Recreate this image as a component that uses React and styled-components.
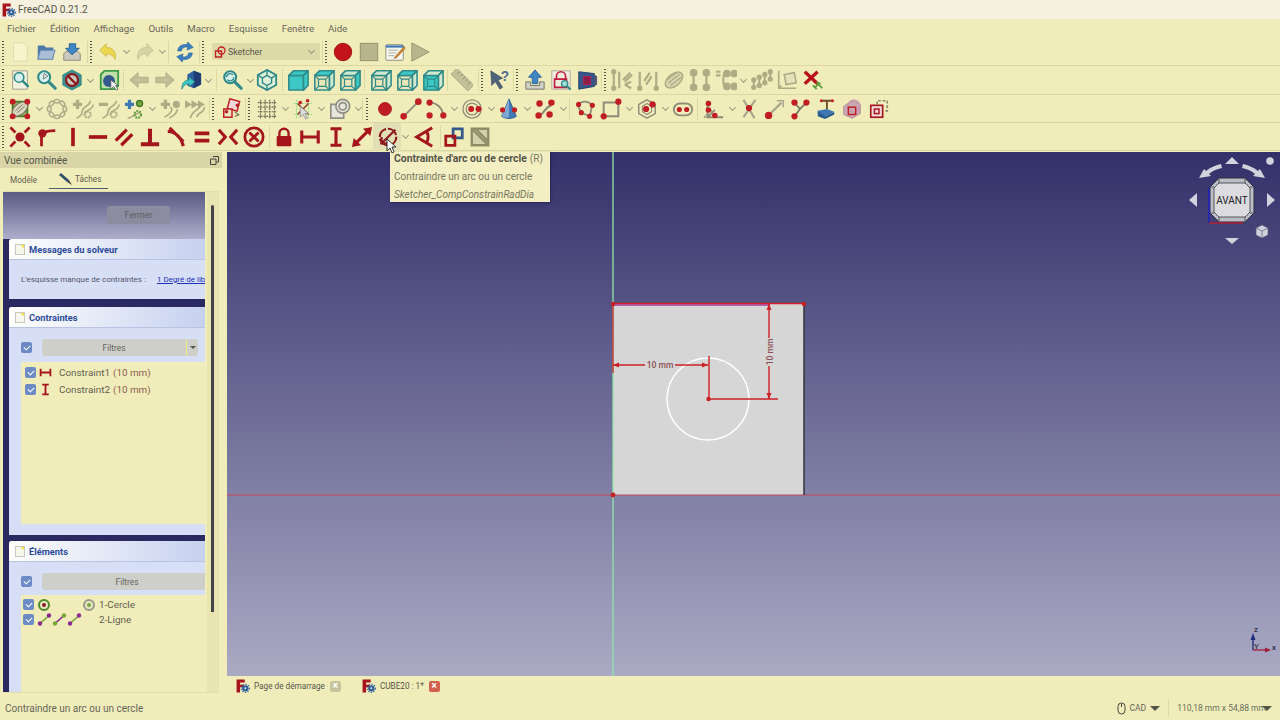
import React from "react"
import styled, { createGlobalStyle } from "styled-components"

const R = "#a5151c"
const RD = "#c01d24"
const K = "#aeac84"
const T = "#2f8a88"
const C = "#3cc8c4"

const GlobalStyle = createGlobalStyle`
  html, body {
    margin: 0;
    padding: 0;
    background: #f1edba;
  }
  * {
    box-sizing: border-box;
  }
`

const Dots = ({ pts, r = 2.6, fill = RD }) =>
  pts.map(([x, y], i) => <circle key={i} cx={x} cy={y} r={r} fill={fill} />)

const cube = (front, top, right, inner) => (
  <g stroke={T} strokeWidth="1.7" strokeLinejoin="round">
    <path d="M2 7h16v16H2z" fill={front ? C : "#e8e6b8"} />
    <path d="M2 7l5-5h16l-5 5z" fill={top ? C : "#cfe8d0"} />
    <path d="M18 7l5-5v16l-5 5z" fill={right ? C : "#cfe8d0"} />
    {inner && <path d="M6 11h8v8H6zM2 7l4 4M18 7l-4 4M2 23l4-4M18 23l-4-4" fill="none" strokeWidth="1.3" />}
  </g>
)

const lens = (
  <g>
    <circle cx="10" cy="9" r="6.5" fill="#d8f0ee" stroke={T} strokeWidth="2.2" />
    <path d="M15 14l7 7" stroke={T} strokeWidth="3.4" strokeLinecap="round" />
  </g>
)

const ICONS = {
  fc: (
    <g>
      <path d="M1 1h14v5H7v4h6v4H7v9H1z" fill="#a8141b" />
      <circle cx="16" cy="16" r="5.5" fill="#2f5f9c" />
      <circle cx="16" cy="16" r="7" fill="none" stroke="#2f5f9c" strokeWidth="1.8" strokeDasharray="2.4 2.2" />
      <circle cx="16" cy="16" r="1.7" fill="#e8e6c8" />
    </g>
  ),
  sketcherWb: (
    <g fill="none" stroke={RD} strokeWidth="2.6">
      <path d="M3 10h12v12H3z" />
      <circle cx="15" cy="9" r="7" />
    </g>
  ),
  new: <path d="M5 2h11l4 4v16H5z" fill="#f7f4cc" stroke="#dedaa8" />,
  open: (
    <g>
      <path d="M3 5h7l2 2h8v13H3z" fill="#4f78a8" />
      <path d="M6 10h16l-3 10H3z" fill="#a9bdd6" stroke="#5f83ad" />
    </g>
  ),
  save: (
    <g>
      <path d="M3 14l3-3h12l3 3v7H3z" fill="#c9c9bd" stroke="#85857a" />
      <path d="M12 15l-7-7h4V3h7v5h4z" fill="#3f86c4" stroke="#2a6096" />
    </g>
  ),
  undo: <path d="M3 10l7-7v4c7 0 11 4 10 13-2-4-5-6-10-6v3z" fill="#ebd84e" stroke="#cdbb4a" />,
  redo: <path d="M21 10l-7-7v4C7 7 3 11 4 20c2-4 5-6 10-6v3z" fill="#d6d3a4" stroke="#c8c596" />,
  refresh: (
    <g fill="#3a7fc0" stroke="#2a6096" strokeWidth=".6">
      <path d="M4 11c0-5 5-8 10-7l1-3 6 6-7 3 1-3c-3-1-6 0-7 4z" />
      <path d="M20 13c0 5-5 8-10 7l-1 3-6-6 7-3-1 3c3 1 6 0 7-4z" />
    </g>
  ),
  record: <circle cx="12" cy="12" r="9.5" fill="#c4141b" stroke="#9c1016" />,
  stop: <rect x="2.5" y="2.5" width="19" height="19" fill="#b7b58c" stroke="#8f8d68" />,
  edit: (
    <g>
      <rect x="2" y="4" width="19" height="17" rx="1" fill="#f6f6ee" stroke="#8a8a7e" />
      <path d="M2 6h19" stroke="#3f78b4" strokeWidth="2.4" />
      <path d="M5 10h10M5 13h8M5 16h6" stroke="#a6a69a" />
      <path d="M22 6l-9 10-2 3 3-1 9-10z" fill="#d88a2c" stroke="#8a5a1c" strokeWidth=".6" />
    </g>
  ),
  play: <path d="M3 2l19 10L3 22z" fill="#b7b58c" stroke="#9a9872" />,
  fit: (
    <g>
      <path d="M4 2h16v20H4z" fill="#f4f3e0" stroke="#9a9a8e" />
      <g transform="translate(3 2) scale(.8)">{lens}</g>
    </g>
  ),
  fitsel: (
    <g>
      {lens}
      <path d="M10 5l-1 6 5-3z" fill="#e8e8e0" stroke="#55605e" strokeWidth=".8" />
    </g>
  ),
  draw: (
    <g>
      <path d="M12 1l10 5.500v11L12 23 2 17.500v-11z" fill="#3d8f8d" stroke={T} />
      <circle cx="12" cy="12" r="6.500" fill="#c9c9bd" stroke="#8c1a20" strokeWidth="2.4" />
      <path d="M7.500 7.500l9 9" stroke="#8c1a20" strokeWidth="2.4" />
    </g>
  ),
  boxsel: (
    <g>
      <path d="M3 6l4-4h15v16l-4 4H3z" fill="#bfe0a8" stroke="#3f9a48" strokeWidth="2" />
      <circle cx="12" cy="13" r="6.500" fill="#33598c" />
      <path d="M14 12v10l3-3 3 4 2-1-3-4h3z" fill="#f4f4f4" stroke="#444" strokeWidth=".7" />
    </g>
  ),
  back: <path d="M2 12l9-8v5h11v6H11v5z" fill="#c0be94" stroke="#aeac84" />,
  fwd: <path d="M22 12l-9-8v5H2v6h11v5z" fill="#c0be94" stroke="#aeac84" />,
  link: (
    <g>
      <path d="M8 6l7-4 8 3v12l-8 4-7-3z" fill="#2f5f9c" />
      <path d="M15 2v19l8-4V5z" fill="#1f3f74" />
      <path d="M2 22c0-7 3-10 8-10V9l6 5-6 5v-3c-4 0-6 2-8 6z" fill={C} stroke={T} strokeWidth=".8" />
    </g>
  ),
  zoom: (
    <g>
      {lens}
      <path d="M6 9a4 4 0 0 1 7-2.600M14 9a4 4 0 0 1-7 2.600" fill="none" stroke={T} strokeWidth="1.5" />
    </g>
  ),
  iso: (
    <g fill="none" stroke={T} strokeWidth="2">
      <path d="M12 1l10 5.500v11L12 23 2 17.500v-11z" fill="#dff0d8" />
      <path d="M12 7l5 3v5l-5 3-5-3v-5zM12 1v6M22 6.500L17 10M2 6.500L7 10M12 23v-5" strokeWidth="1.5" />
    </g>
  ),
  front: cube(true, true, true, false),
  top: cube(false, true, false, true),
  right: cube(false, false, true, true),
  rear: cube(false, false, false, true),
  bottom: cube(false, true, false, true),
  left: cube(true, false, false, true),
  measure: (
    <g transform="rotate(45 12 12)">
      <rect x="-1" y="7" width="26" height="9" fill="#c2c098" stroke={K} />
      <path d="M4 7v4M8 7v3M12 7v4M16 7v3M20 7v4" stroke="#8f8d68" />
    </g>
  ),
  whats: (
    <g>
      <path d="M3 2l13 8-5 2 5 8-3 2-5-8-4 4z" fill="#4f6478" stroke="#36465a" strokeWidth=".6" />
      <text x="14" y="13" fontFamily="Liberation Sans, sans-serif" fontWeight="700" fontSize="15" fill="#4f6e92">?</text>
    </g>
  ),
  export: (
    <g>
      <path d="M2 14h5v4h10v-4h5v8H2z" fill="#d0d0c4" stroke="#6d6d64" />
      <path d="M12 1l7 8h-4v7H9V9H5z" fill="#3f86c4" stroke="#2a6096" />
    </g>
  ),
  viewsk: (
    <g>
      <rect x="2" y="2" width="20" height="20" fill="#f0ede0" stroke="#a8a89a" />
      <path d="M7 11V8a5 5 0 0 1 10 0v3M5 11h13v9H5z" fill="none" stroke="#c01d3a" strokeWidth="1.8" />
      <circle cx="16" cy="16" r="3.400" fill="#9fe0da" stroke={T} strokeWidth="1.4" />
      <path d="M18.500 18.500l4 4" stroke={T} strokeWidth="2.2" />
    </g>
  ),
  section: (
    <g>
      <path d="M3 3l17 2v14L3 22z" fill="#33598c" stroke="#24406c" />
      <path d="M20 6l3 2v9l-3 2z" fill="#557" />
      <rect x="8" y="8" width="8" height="9" fill="#8c1f4a" stroke="#b82050" />
    </g>
  ),
  g1: (
    <g fill="none" stroke={K} strokeWidth="2.4">
      <path d="M3 3v18M9 3v18M13 12l8-8M15 14l8-8M15 17l7-3M15 17l7 4" />
      <circle cx="3" cy="3" r="1.700" fill={K} />
      <circle cx="3" cy="21" r="1.700" fill={K} />
    </g>
  ),
  g2: (
    <g fill="none" stroke={K} strokeWidth="2.4">
      <path d="M3 3v18M21 3v18M8 13l6-9M10 17l6-9" />
      <circle cx="3" cy="21" r="1.700" fill={K} />
      <circle cx="21" cy="21" r="1.700" fill={K} />
    </g>
  ),
  g3: (
    <g fill="none" stroke={K} strokeWidth="1.6">
      <ellipse cx="12" cy="12" rx="11" ry="6.500" transform="rotate(-40 12 12)" fill="#d8d6ae" />
      <path d="M6 15l12-9M8 18l12-9M4 12l11-8" />
    </g>
  ),
  g4: (
    <g fill="none" stroke={K} strokeWidth="2.4">
      <path d="M5 5v14M19 5v14M6 3h3M15 3h3M6 21h3M15 21h3" />
      <Dots pts={[[5, 4], [19, 4], [5, 20], [19, 20]]} r={3} fill={K} />
    </g>
  ),
  g5: (
    <g fill="none" stroke={K} strokeWidth="2.4">
      <path d="M1 3h5M1 7h5M14 4c-4 0-5 3-5 8s1 8 5 8M20 4c2 0 3 1 3 3M20 20c2 0 3-1 3-3" />
      <Dots pts={[[13, 5], [21, 5], [13, 19], [21, 19]]} r={3} fill={K} />
    </g>
  ),
  g6: (
    <g stroke={K} strokeWidth="2.2" fill={K}>
      <path d="M3 12v8M9 9v9M15 6v9M21 3v8" />
      <Dots pts={[[3, 12], [3, 20], [9, 9], [9, 18], [15, 6], [15, 15], [21, 3], [21, 11]]} r={1.8} fill={K} />
    </g>
  ),
  g7: (
    <g fill="none" stroke={K} strokeWidth="1.8">
      <path d="M3 2v19h19M3 21l3-3" />
      <path d="M9 6l11-2 2 11-11 2z" fill="#e4e2b8" />
    </g>
  ),
  delc: (
    <g>
      <path d="M3 3l14 13M17 3L3 16" stroke="#b8121a" strokeWidth="3.6" />
      <path d="M12 18l4 4M16 14l6 7M14 20l6-5" stroke="#5f9c3a" strokeWidth="2" />
    </g>
  ),
  edits: (
    <g>
      <path d="M4 4h16v16H4z" fill="#9ab860" stroke="#3f7a2a" strokeWidth="2" />
      <ellipse cx="12" cy="12" rx="10" ry="6" transform="rotate(-40 12 12)" fill="#d8d6c0" stroke="#77755a" strokeWidth="1.4" />
      <path d="M7 14l8-7M9 16l8-7" stroke="#77755a" />
      <Dots pts={[[4, 4], [20, 4], [4, 20], [20, 20]]} r={3.2} />
    </g>
  ),
  polar: (
    <g fill="#e8e6c0" stroke={K} strokeWidth="1.5">
      {[0, 45, 90, 135, 180, 225, 270, 315].map(a => (
        <ellipse key={a} cx="12" cy="3.500" rx="3" ry="2" transform={`rotate(${a} 12 12)`} />
      ))}
    </g>
  ),
  cplus: (
    <g fill="none" stroke={K} strokeWidth="1.8">
      <path d="M6 2v10M1 7h10" strokeWidth="3.6" />
      <path d="M20 3c0 6-9 6-9 12 0 3-2 5-6 7M23 7c0 6-9 6-9 11" />
      <circle cx="17" cy="18" r="3.400" strokeDasharray="2 1" strokeWidth="2.4" />
    </g>
  ),
  cminus: (
    <g fill="none" stroke={K} strokeWidth="1.8">
      <path d="M1 7h10" strokeWidth="3.6" />
      <path d="M20 3c0 6-9 6-9 12 0 3-2 5-6 7M23 7c0 6-9 6-9 11" />
      <circle cx="17" cy="18" r="3.400" strokeDasharray="2 1" strokeWidth="2.4" />
    </g>
  ),
  cconv: (
    <g fill="none" strokeWidth="1.6">
      <path d="M6 2v10M1 7h10" stroke="#3f78b4" strokeWidth="3.6" />
      <path d="M4 22c6-1 8-5 14-6" stroke={K} />
      <circle cx="17" cy="6" r="3.200" fill="#79a83a" stroke="#3f7a2a" />
      <circle cx="15" cy="18" r="3.600" stroke="#5f9c3a" strokeDasharray="2 1" strokeWidth="2.4" />
    </g>
  ),
  cpair: (
    <g fill="none" stroke={K} strokeWidth="1.8">
      <path d="M7 2v10M2 7h10" strokeWidth="3.6" />
      <circle cx="19" cy="7" r="3" fill={K} />
      <path d="M12 10c5 2 0 8-6 11M20 12c0 6-6 8-9 10" />
    </g>
  ),
  carrow: (
    <g fill="none" stroke={K} strokeWidth="1.8">
      <path d="M1 4l5 3-5 3zM8 4l5 3-5 3zM15 4l5 3-5 3z" fill={K} />
      <path d="M21 10c1 6-8 6-8 11M16 9c0 4-9 5-10 13" />
    </g>
  ),
  clone: (
    <g>
      <rect x="8" y="2" width="11" height="11" transform="rotate(15 13 8)" fill="#f0d8d8" stroke={RD} strokeWidth="1.6" />
      <rect x="3" y="12" width="9" height="9" fill="#e8e6c0" stroke={RD} strokeWidth="1.6" />
      <Dots pts={[[6, 15], [18, 8]]} r={2} />
      <path d="M15 15l5 4M15 20l5-2" stroke="#8a8868" strokeWidth="1.6" />
    </g>
  ),
  grid: (
    <path
      d="M5 2v20M10 2v20M15 2v20M20 2v20M2 5h20M2 10h20M2 15h20M2 20h20"
      stroke="#6f6d58"
      strokeWidth="1.3"
      strokeDasharray="2 1"
      fill="none"
    />
  ),
  snap: (
    <g>
      <path d="M5 2v20M18 2v20M2 6h20M2 18h20" stroke="#9ae08a" strokeWidth="1.2" strokeDasharray="2 1" />
      <path d="M6 6l12 12M18 6L6 18" stroke="#8a3a1c" strokeWidth="1.6" />
      <Dots pts={[[9, 5], [17, 3]]} r={2} />
      <path d="M9 9v12l3-3 3 5 2-1-3-5h4z" fill="#ddd" stroke="#888" strokeWidth=".8" />
    </g>
  ),
  order: (
    <g fill="none" stroke="#8f8f84" strokeWidth="1.8">
      <path d="M2 7h14v15H2z" fill="#e6e6da" />
      <circle cx="15" cy="9" r="7.500" fill="#e6e6da" />
      <circle cx="15" cy="9" r="4" />
    </g>
  ),
  point: <circle cx="12" cy="12" r="7" fill={RD} stroke={R} />,
  line: (
    <g>
      <path d="M4 20L20 4" stroke="#8f8d78" strokeWidth="2" />
      <Dots pts={[[4, 20], [20, 4]]} r={3.600} />
    </g>
  ),
  arc: (
    <g>
      <path d="M5 5c8 0 14 6 15 14" fill="none" stroke="#8f8d78" strokeWidth="2" />
      <Dots pts={[[5, 5], [5, 19], [20, 19]]} r={3.400} />
    </g>
  ),
  circle: (
    <g>
      <circle cx="11" cy="12" r="10" fill="none" stroke="#8f8d78" strokeWidth="1.4" />
      <circle cx="11" cy="12" r="6.500" fill="none" stroke="#8f8d78" strokeWidth="1.4" />
      <Dots pts={[[10, 12], [18, 12]]} r={3.200} />
    </g>
  ),
  cone: (
    <g>
      <path d="M12 1L4 20c4 3 12 3 16 0z" fill="#3f78b4" stroke="#2a5e92" />
      <path d="M12 1L4 20c2 1 6 2 8 1z" fill="#7fa8d0" />
      <Dots pts={[[5, 13], [18, 13]]} r={2.800} />
    </g>
  ),
  bspline: (
    <g>
      <path d="M5 19c6 0 6-9 14-11" fill="none" stroke="#8f8d78" strokeWidth="2.4" />
      <Dots pts={[[6, 6], [19, 5], [5, 19], [17, 18]]} r={3.500} />
    </g>
  ),
  polyline: (
    <g>
      <path d="M4 8c5-6 12-5 16 0l-3 12-9-4z" fill="none" stroke="#8f8d78" strokeWidth="2" />
      <Dots pts={[[5, 7], [20, 8], [8, 16], [17, 20]]} r={2.800} />
    </g>
  ),
  rect: (
    <g>
      <path d="M4 5h16v15H4z" fill="none" stroke="#8f8d78" strokeWidth="2.2" />
      <Dots pts={[[20, 4], [4, 20]]} r={3.400} />
    </g>
  ),
  hexa: (
    <g>
      <path d="M12 2l9 5v10l-9 5-9-5V7z" fill="none" stroke="#8f8d78" strokeWidth="1.6" />
      <path d="M12 6l5 3v6l-5 3-5-3V9z" fill="none" stroke="#8f8d78" strokeWidth="1.2" />
      <Dots pts={[[11, 12], [18, 7]]} r={3.400} />
    </g>
  ),
  slot: (
    <g>
      <rect x="2" y="6" width="20" height="13" rx="6.500" fill="none" stroke="#8f8d78" strokeWidth="2" />
      <Dots pts={[[8, 12.500], [16, 12.500]]} r={2.800} />
    </g>
  ),
  fillet: (
    <g>
      <path d="M6 3v18h17M6 21l8-8" fill="none" stroke="#8f8d78" strokeWidth="2" />
      <path d="M2 21l8-8 4 8z" fill="none" stroke="#8f8d78" />
      <Dots pts={[[7, 6], [7, 13], [14, 19]]} r={3} />
    </g>
  ),
  trim: (
    <g>
      <path d="M6 2l12 20M19 2L6 21" stroke="#a9a78e" strokeWidth="2.400" />
      <Dots pts={[[12, 11]]} r={3.400} />
    </g>
  ),
  extend: (
    <g>
      <path d="M6 18L19 5" stroke="#a9a78e" strokeWidth="2.600" />
      <path d="M14 3h7v7" fill="none" stroke="#a9a78e" strokeWidth="1.800" />
      <Dots pts={[[5, 19]]} r={4} />
    </g>
  ),
  split: (
    <g>
      <path d="M6 5l6 7 7-7M12 12l-6 8" fill="none" stroke="#7a7a64" strokeWidth="2" />
      <Dots pts={[[6, 5], [19, 5], [6, 20]]} r={3.400} />
    </g>
  ),
  external: (
    <g>
      <path d="M3 14l10-2 8 3-10 5-8-3z" fill="#3f78b4" />
      <path d="M3 14v6l8 3 10-5v-3l-10 5z" fill="#2a5e92" />
      <path d="M13 12V3M8 3h10" stroke="#6f4a2a" strokeWidth="2" />
      <Dots pts={[[7, 3], [19, 3]]} r={1.700} />
    </g>
  ),
  carbon: (
    <g>
      <path d="M3 9l9-6 9 4v10l-9 5-9-4z" fill="#c9a9b4" stroke="#b08a98" />
      <circle cx="14" cy="9" r="6.500" fill="none" stroke="#c89aa8" strokeWidth="2" />
      <rect x="8" y="10" width="8" height="8" fill="none" stroke={RD} strokeWidth="1.600" />
    </g>
  ),
  refgeo: (
    <g>
      <rect x="3" y="8" width="13" height="13" fill="#f0d8d8" stroke={R} strokeWidth="1.800" />
      <rect x="7" y="12" width="5" height="5" fill="none" stroke={R} strokeWidth="1.600" />
      <path d="M10 7V3h11v11h-4" fill="none" stroke="#8a8868" strokeWidth="1.800" strokeDasharray="3 2" />
    </g>
  ),
  coincident: (
    <g stroke={R} strokeWidth="3" fill={R}>
      <path d="M1.500 1.500l5.500 5.500M22.500 1.500L17 7M1.500 22.500L7 17M22.500 22.500L17 17" />
      <circle cx="12" cy="12" r="5" stroke="none" />
    </g>
  ),
  ptonobj: (
    <g fill="none" stroke={R} strokeWidth="3">
      <path d="M6 22V12c0-5 5-7 15-7" />
      <circle cx="7" cy="8" r="4.500" fill={R} stroke="none" />
    </g>
  ),
  vert: <path d="M12 2v20" stroke={R} strokeWidth="4" />,
  horiz: <path d="M2 12h20" stroke={R} strokeWidth="4" />,
  para: <path d="M3 16L15 4M9 21L21 9" stroke={R} strokeWidth="3.600" />,
  perp: <path d="M12 3v15M2 20h20" stroke={R} strokeWidth="4.400" />,
  tang: <path d="M3 6c9 0 15 7 17 16M5 2l6 6M13 10l7 7" fill="none" stroke={R} strokeWidth="3.400" />,
  equal: <path d="M4 8h16M4 16h16" stroke={R} strokeWidth="4" />,
  symm: <path d="M2 4l7 8-7 8M22 4l-7 8 7 8" fill="none" stroke={R} strokeWidth="3.400" />,
  block: (
    <g fill="none" stroke={R} strokeWidth="3">
      <circle cx="12" cy="12" r="10" />
      <path d="M7 7l10 10M17 7L7 17" />
    </g>
  ),
  lock: (
    <g>
      <path d="M7 11V8a5 5 0 0 1 10 0v3" fill="none" stroke={R} strokeWidth="2.600" />
      <rect x="4" y="11" width="16" height="11" rx="1" fill={R} />
    </g>
  ),
  hdist: <path d="M3 5v14M21 5v14M3 12h18" stroke={R} strokeWidth="3.400" />,
  vdist: <path d="M6 3h12M6 21h12M12 3v18" stroke={R} strokeWidth="3.400" />,
  dist: (
    <g>
      <path d="M5 19L19 5" stroke={R} strokeWidth="3.400" />
      <path d="M23 1l-10 2 8 8zM1 23l10-2-8-8z" fill={R} />
    </g>
  ),
  raddia: (
    <g fill="none" stroke="#8c1a20" strokeWidth="2.400">
      <circle cx="12" cy="12" r="9" strokeDasharray="12 2" />
      <path d="M4 20L20 4M5 12v7h7" />
    </g>
  ),
  angle: <path d="M21 2L4 12l17 10M15 6c2 4 2 8 0 12" fill="none" stroke={R} strokeWidth="3.200" />,
  toggle: (
    <g fill="none" strokeWidth="3">
      <path d="M11 3h10v10H11z" stroke="#33598c" />
      <path d="M3 11h10v10H3z" stroke={R} />
    </g>
  ),
  refmode: (
    <g fill="none" stroke="#8f8d68" strokeWidth="2.600">
      <path d="M3 3h18v18H3z" fill="#d2d0a8" />
      <path d="M3 3l18 18M7 3l14 14" />
    </g>
  ),
}

const WIDTHS = { more: 8, sep: 1, grip: 2, select: 108 }

const ROWS = [
  [
    ["grip", 3], ["new", 20], ["open", 46], ["save", 72], ["sep", 87], ["grip", 91], ["undo", 108], ["more", 126],
    ["redo", 145], ["more", 162], ["sep", 168], ["refresh", 185], ["sep", 199], ["grip", 203], ["select", 266],
    ["sep", 322], ["grip", 326], ["record", 343], ["stop", 369], ["edit", 395], ["play", 420],
  ],
  [
    ["grip", 3], ["fit", 20], ["fitsel", 46], ["draw", 72], ["more", 90], ["boxsel", 109], ["sep", 123], ["back", 139],
    ["fwd", 165], ["link", 191], ["more", 208], ["sep", 216], ["zoom", 232], ["more", 250], ["iso", 267], ["sep", 282],
    ["front", 298], ["top", 324], ["right", 350], ["sep", 364], ["rear", 381], ["bottom", 407], ["left", 433],
    ["sep", 447], ["measure", 462], ["sep", 478], ["grip", 482], ["whats", 499], ["sep", 513], ["grip", 517],
    ["export", 535], ["viewsk", 561], ["section", 587], ["sep", 601], ["grip", 605], ["g1", 622], ["g2", 648],
    ["g3", 674], ["g4", 700], ["g5", 726], ["more", 743], ["g6", 762], ["g7", 787], ["delc", 813],
  ],
  [
    ["grip", 3], ["edits", 20], ["more", 39], ["polar", 57], ["cplus", 83], ["cminus", 109], ["cconv", 135], ["more", 152],
    ["cpair", 170], ["carrow", 196], ["sep", 209], ["grip", 213], ["clone", 232], ["sep", 245], ["grip", 249], ["grid", 267],
    ["more", 285], ["snap", 303], ["more", 321], ["order", 340], ["more", 358], ["sep", 362], ["grip", 367], ["point", 385],
    ["line", 411], ["arc", 436], ["more", 454], ["circle", 473], ["more", 491], ["cone", 509], ["more", 527],
    ["bspline", 545], ["more", 563], ["sep", 569], ["polyline", 585], ["rect", 611], ["more", 629], ["hexa", 647],
    ["more", 665], ["slot", 683], ["sep", 697], ["fillet", 713], ["more", 732], ["trim", 749], ["extend", 775],
    ["split", 800], ["external", 826], ["carbon", 852], ["refgeo", 879],
  ],
  [
    ["grip", 3], ["coincident", 20], ["ptonobj", 47], ["vert", 73], ["horiz", 98], ["para", 124], ["perp", 150],
    ["tang", 176], ["equal", 202], ["symm", 228], ["block", 254], ["sep", 269], ["lock", 284], ["hdist", 310],
    ["vdist", 336], ["dist", 362], ["raddia", 388], ["more", 405], ["angle", 424], ["sep", 440], ["toggle", 454],
    ["refmode", 480],
  ],
]

const Page = styled.div`
  position: relative;
  width: 1280px;
  height: 720px;
  overflow: hidden;
  display: flex;
  flex-direction: column;
  background: #f1edba;
  color: #5f5f50;
  font-family: Roboto, "Open Sans", sans-serif;
  font-size: 10px;
`

const TitleBar = styled.div`
  height: 19px;
  flex: none;
  display: flex;
  align-items: center;
  gap: 2px;
  padding-left: 2px;
  background: #f5f1de;
  font-size: 10.100px;
  color: #55554a;
`

const MenuBar = styled.div`
  height: 19px;
  flex: none;
  display: flex;
  align-items: center;
  padding-left: 7px;
  gap: 14px;
  font-size: 9.700px;
  color: #66665a;
`

const Bar = styled.div`
  height: ${p => p.$h}px;
  flex: none;
  display: flex;
  align-items: center;
  border-bottom: 1.500px solid #dcd8a6;
`

const Slot = styled.span`
  flex: none;
  display: flex;
  align-items: center;
  justify-content: center;
  position: relative;
  width: ${p => p.$w}px;
  height: 22px;
  margin-left: ${p => p.$ml}px;
  &::before {
    content: ${p => (p.$hover ? '""' : "none")};
    position: absolute;
    left: -4px;
    top: -3px;
    width: 28px;
    height: 28px;
    background: #e2dfb4;
  }
  svg {
    position: relative;
  }
`

const More = styled.span`
  flex: none;
  width: 5px;
  height: 5px;
  border-right: 1px solid #9a9a80;
  border-bottom: 1px solid #9a9a80;
  transform: translateY(-1px) rotate(45deg);
`

const Sep = styled.span`
  width: 1px;
  height: 22px;
  background: #dcd8a6;
`

const Grip = styled.span`
  width: 2px;
  height: 22px;
  background: repeating-linear-gradient(#55554a 0 1px, transparent 1px 3px);
`

const WorkbenchSelect = styled.div`
  width: 108px;
  height: 17px;
  display: flex;
  align-items: center;
  gap: 2px;
  padding: 0 6px 0 2px;
  background: #dedaa8;
  border-radius: 2px;
  font-size: 8.800px;
  color: #55554a;
`

const SelectLabel = styled.span`
  flex: 1;
`

const Main = styled.div`
  flex: 1;
  min-height: 0;
  display: flex;
`

const Dock = styled.div`
  width: 227px;
  flex: none;
  display: flex;
  flex-direction: column;
  padding-top: 1px;
`

const DockHeader = styled.div`
  width: 222px;
  height: 16px;
  flex: none;
  display: flex;
  align-items: center;
  justify-content: space-between;
  padding: 0 3px 0 4px;
  background: #d9d5a6;
  font-size: 10px;
  color: #55554a;
`

const TabStrip = styled.div`
  height: 23px;
  flex: none;
  display: flex;
  align-items: center;
  padding-left: 10px;
  font-size: 8.200px;
`

const DockTab = styled.div`
  display: flex;
  align-items: center;
  gap: 3px;
  height: 19px;
  margin-left: ${p => (p.$active ? "12px" : 0)};
  padding: 0 ${p => (p.$active ? "7px" : 0)} 0 ${p => (p.$active ? "9px" : 0)};
  border-bottom: ${p => (p.$active ? "1px solid #4f5f70" : "none")};
`

const TaskFrame = styled.div`
  width: 216px;
  height: 502px;
  margin-left: 3px;
  flex: none;
  display: flex;
  border: 1px solid #e4e0ac;
  border-left: 0;
`

const TaskScroll = styled.div`
  width: 202px;
  height: 100%;
  flex: none;
  overflow: hidden;
  background: #2b2962;
  padding-left: 6px;
`

const TaskTop = styled.div`
  height: 47px;
  margin-left: -6px;
  padding-top: 14px;
  background: linear-gradient(#5a5a84, #aeaecb);
`

const CloseButton = styled.div`
  width: 63px;
  height: 18px;
  margin-left: 104px;
  display: flex;
  align-items: center;
  justify-content: center;
  background: #8c8ca0;
  border-radius: 2px;
  font-size: 8.800px;
  color: #5d5d66;
`

const Card = styled.section`
  height: ${p => p.$h}px;
  margin-bottom: ${p => p.$mb || 0}px;
  display: flex;
  flex-direction: column;
  background: #d6dff6;
  border-radius: 3px 0 0 0;
  overflow: hidden;
`

const CardHead = styled.header`
  height: 21px;
  flex: none;
  display: flex;
  align-items: center;
  gap: 4px;
  padding-left: 6px;
  background: linear-gradient(90deg, #ffffff, #c6d1ef);
  border-bottom: 1px solid #b9c4e2;
  font-size: 9.300px;
  font-weight: 700;
  color: #2c4b98;
`

const CardIcon = styled.span`
  width: 10px;
  height: 11px;
  background: linear-gradient(225deg, #f4e14a 0 18%, #f7f6ea 19%);
  border: 1px solid #c8c8bc;
`

const Message = styled.div`
  margin-top: 15px;
  padding-left: 12px;
  white-space: nowrap;
  font-size: 8px;
  color: #55556a;
  a {
    margin-left: 11px;
    color: #2430b8;
    text-decoration: underline;
  }
`

const FilterRow = styled.div`
  height: 17px;
  flex: none;
  margin-top: ${p => p.$mt}px;
  padding-left: 12px;
  display: flex;
  align-items: center;
  gap: 10px;
`

const Check = styled.span`
  width: 11px;
  height: 11px;
  flex: none;
  display: flex;
  align-items: center;
  justify-content: center;
  background: #6c8ac4;
  border-radius: 2px;
  &::after {
    content: "";
    width: 5px;
    height: 3px;
    margin-top: -1px;
    border-left: 1px solid #fff;
    border-bottom: 1px solid #fff;
    transform: rotate(-45deg);
  }
`

const FilterButton = styled.div`
  height: 17px;
  width: ${p => p.$w}px;
  flex: none;
  display: flex;
  align-items: center;
  background: #cfcfc9;
  border-radius: 3px;
  font-size: 8.400px;
  color: #66665e;
`

const FilterLabel = styled.span`
  flex: 1;
  text-align: center;
`

const FilterDrop = styled.span`
  width: 12px;
  height: 100%;
  flex: none;
  display: flex;
  align-items: center;
  justify-content: center;
  border-left: 1px solid #f0e98a;
  &::after {
    content: "";
    border-left: 3px solid transparent;
    border-right: 3px solid transparent;
    border-top: 3px solid #55554a;
  }
`

const ListBox = styled.div`
  margin: ${p => p.$mt}px 0 ${p => p.$mb}px 12px;
  flex: 1;
  padding: 2px 0 0 ${p => p.$pad}px;
  background: #f1edba;
  font-size: 9.900px;
`

const ListRow = styled.div`
  height: ${p => p.$h}px;
  display: flex;
  align-items: center;
  white-space: nowrap;
`

const RowIcons = styled.span`
  width: ${p => p.$w}px;
  flex: none;
  display: flex;
  align-items: center;
  gap: ${p => p.$gap}px;
  margin-left: 3px;
`

const Dim = styled.span`
  margin-left: 3px;
  color: #8c5a50;
`

const ScrollTrack = styled.div`
  flex: 1;
  position: relative;
  background: #e9e5b0;
  margin-left: 2px;
`

const ScrollThumb = styled.div`
  position: absolute;
  left: 4px;
  top: 13px;
  width: 3px;
  height: 407px;
  background: #44444a;
  border-radius: 2px 2px 0 0;
`

const Center = styled.div`
  flex: 1;
  min-width: 0;
  display: flex;
  flex-direction: column;
  padding-top: 1px;
`

const Viewport = styled.div`
  height: 524px;
  flex: none;
  background: linear-gradient(#33306a, #aaaac4);
`

const Canvas = styled.svg`
  display: block;
`

const DocTabs = styled.div`
  height: 20px;
  flex: none;
  display: flex;
  align-items: center;
  padding-left: 9px;
  font-size: 8.200px;
  color: #55554a;
`

const DocTab = styled.div`
  display: flex;
  align-items: center;
  gap: 4px;
  margin-right: 21px;
`

const CloseBox = styled.span`
  width: 11px;
  height: 11px;
  margin-left: 1px;
  display: flex;
  align-items: center;
  justify-content: center;
  border-radius: 2px;
  background: ${p => (p.$active ? "#d2604e" : "#c6c49c")};
  color: #fff;
  font-size: 10px;
  font-weight: 700;
  line-height: 1;
`

const StatusBar = styled.div`
  height: 23px;
  flex: none;
  display: flex;
  align-items: center;
  padding: 0 8px 1px 5px;
  font-size: 10px;
  color: #66665a;
`

const StatusRight = styled.div`
  margin-left: auto;
  display: flex;
  align-items: center;
  font-size: 8.500px;
`

const NavStyle = styled.span`
  display: flex;
  align-items: center;
  gap: 4px;
  padding-right: 8px;
  border-right: 1px solid #dedaa6;
  margin-right: 8px;
  height: 18px;
`

const DownTri = styled.span`
  border-left: 5px solid transparent;
  border-right: 5px solid transparent;
  border-top: 5px solid #55554a;
  margin-left: ${p => p.$ml || 0}px;
`

const Size = styled.span`
  white-space: nowrap;
  color: #66705a;
`

const Tooltip = styled.div`
  position: absolute;
  left: 390px;
  top: 152px;
  width: 160px;
  height: 50px;
  padding: 0 4px;
  display: flex;
  flex-direction: column;
  background: #f3efc2;
  box-shadow: 1px 1px 2px rgba(20, 20, 50, 0.5);
  font-size: 10px;
  color: #77775f;
  white-space: nowrap;
`

const TipLine = styled.div`
  height: ${p => p.$h}px;
  display: flex;
  align-items: center;
  b {
    color: #55554a;
    font-size: 10.400px;
    margin-right: 3px;
  }
`

const Cursor = styled.svg`
  position: absolute;
  left: 386px;
  top: 138px;
`

const Icon = ({ name, size = 22 }) => (
  <svg width={size} height={size} viewBox="0 0 24 24">
    {ICONS[name]}
  </svg>
)

const ToolRow = ({ items, h }) => {
  let prev = 0
  return (
    <Bar $h={h}>
      {items.map(([name, cx], i) => {
        const w = WIDTHS[name] || 22
        const ml = cx - w / 2 - prev
        prev = cx + w / 2
        return (
          <Slot key={i} $w={w} $ml={ml} $hover={name === "raddia"}>
            {name === "more" && <More />}
            {name === "sep" && <Sep />}
            {name === "grip" && <Grip />}
            {name === "select" && (
              <WorkbenchSelect>
                <Icon name="sketcherWb" size={12} />
                <SelectLabel>Sketcher</SelectLabel>
                <More />
              </WorkbenchSelect>
            )}
            {ICONS[name] && <Icon name={name} />}
          </Slot>
        )
      })}
    </Bar>
  )
}

const Edge = ({ a, b }) => (
  <svg width="15" height="13" viewBox="0 0 15 13">
    <path d="M3 10.500L12 2.500" stroke={b} strokeWidth="1.600" />
    <circle cx="3" cy="10.500" r="2.200" fill={a} />
    <circle cx="12" cy="2.500" r="2.200" fill={a} />
  </svg>
)

const Ring = ({ dot, ring, bg }) => (
  <svg width="14" height="14" viewBox="0 0 14 14">
    <circle cx="7" cy="7" r="5" fill={bg} stroke={ring} strokeWidth="2" />
    <circle cx="7" cy="7" r="2" fill={dot} />
  </svg>
)

// Scene coordinates are page pixels, shifted by the viewport origin.
const Scene = () => (
  <Canvas width="1053" height="524" viewBox="227 152 1053 524">
    <rect x="613" y="304" width="191" height="191" fill="#d6d6d6" />
    <path d="M613 152V676" stroke="#8fe6a8" strokeWidth="1.300" />
    <path d="M227 495H1280" stroke="#c44858" strokeWidth="1" />
    <path d="M804 304V495" stroke="#33333a" strokeWidth="1.500" />
    <path d="M613 305H770" stroke="#a03aa0" strokeWidth="1.500" />
    <path d="M613 303.500H805M613 304V373" fill="none" stroke="#cf2026" strokeWidth="1.300" />
    <circle cx="708" cy="399" r="41" fill="none" stroke="#fff" strokeWidth="1.500" />
    <g fill="none" stroke="#cc2026" strokeWidth="1.400">
      <path d="M613 365H645M675 365H708M709 356V399M709 399H778M769 304V338M769 366V399" />
    </g>
    <path
      d="M613 365l6-2.500v5zM708 365l-6-2.500v5zM769 304l-2.500 6h5zM769 399l-2.500-6h5z"
      fill="#cc2026"
    />
    <text x="660" y="368" textAnchor="middle" fontFamily="Roboto, sans-serif" fontSize="8.500" fontWeight="500" fill="#8c5054">
      10 mm
    </text>
    <text
      x="769.500"
      y="355"
      textAnchor="middle"
      transform="rotate(-90 769.500 352)"
      fontFamily="Roboto, sans-serif"
      fontSize="8.500"
      fontWeight="500"
      fill="#8c5054"
    >
      10 mm
    </text>
    <g fill="#c81e24">
      <circle cx="613" cy="304" r="2.200" />
      <circle cx="804" cy="304" r="2.200" />
      <circle cx="613" cy="495" r="2.400" />
      <circle cx="708.500" cy="399" r="2.200" />
    </g>

    <g>
      <path d="M1219 178h26l9 9v26l-9 9h-26l-9-9v-26z" fill="#bcbcc4" stroke="#2a2a40" strokeWidth="1" />
      <path d="M1219 183h26l5 5v24l-5 5h-26l-5-5v-24z" fill="#dcdcde" stroke="#55555f" strokeWidth="1" />
      <path d="M1219 178v5M1245 178v5M1210 187h4M1254 187h-4M1210 213h4M1254 213h-4M1219 222v-5M1245 222v-5" stroke="#55555f" />
      <text x="1232" y="203.500" textAnchor="middle" fontFamily="Roboto, sans-serif" fontSize="10" fill="#22222a">
        AVANT
      </text>
      <path d="M1209 188V223" stroke="#1c24c0" strokeWidth="1.500" />
      <path d="M1209 223H1243" stroke="#b01c30" strokeWidth="1.500" />
      <g fill="#d2d2dc">
        <path d="M1232 157l7 7h-14zM1189 200l8-7v14zM1275 200l-8-7v14zM1232 244l-7-6h14z" />
        <path d="M1199 178l5-9 2 2c5-4 10-6 15-7l1 4c-5 1-10 3-13 6l2 2z" />
        <path d="M1265 178l-5-9-2 2c-5-4-10-6-15-7l-1 4c5 1 10 3 13 6l-2 2z" />
        <circle cx="1270" cy="161" r="3.800" />
        <path d="M1262 225l6 3v7l-6 3-6-3v-7z" stroke="#5a5a7a" strokeWidth=".7" />
      </g>
      <path d="M1256 228l6 3 6-3M1262 231v7" stroke="#5a5a7a" strokeWidth=".7" fill="none" />
    </g>

    <path d="M1253 650V638" stroke="#1c2c80" strokeWidth="1.300" />
    <path d="M1253 633l-2.500 7h5z" fill="#1c2c80" />
    <path d="M1253 650H1268" stroke="#a01c3c" strokeWidth="1.300" />
    <path d="M1271 650l-6-2.500v5z" fill="#a01c3c" />
    <g fontFamily="Roboto, sans-serif" fontSize="8" fontWeight="500" fill="#33334a">
      <text x="1254" y="632">z</text>
      <text x="1254" y="649">Y</text>
      <text x="1272" y="650">x</text>
    </g>
  </Canvas>
)

export default function App() {
  return (
    <Page>
      <GlobalStyle />
      <TitleBar>
        <Icon name="fc" size={14} />
        FreeCAD 0.21.2
      </TitleBar>
      <MenuBar>
        {["Fichier", "Édition", "Affichage", "Outils", "Macro", "Esquisse", "Fenêtre", "Aide"].map(m => (
          <span key={m}>{m}</span>
        ))}
      </MenuBar>
      <ToolRow items={ROWS[0]} h={28} />
      <ToolRow items={ROWS[1]} h={29} />
      <ToolRow items={ROWS[2]} h={28} />
      <ToolRow items={ROWS[3]} h={28} />
      <Main>
        <Dock>
          <DockHeader>
            Vue combinée
            <svg width="9" height="9" viewBox="0 0 9 9">
              <path d="M3 .5h5.500V6H6.500M.5 3H6v5.500H.5z" fill="none" stroke="#44443a" />
            </svg>
          </DockHeader>
          <TabStrip>
            <DockTab>Modèle</DockTab>
            <DockTab $active>
              <svg width="14" height="12" viewBox="0 0 14 12">
                <path d="M1 2l2-2 8 7-2 2z" fill="#33506e" />
                <path d="M9 9l2-2 3 5z" fill="#444" />
              </svg>
              Tâches
            </DockTab>
          </TabStrip>
          <TaskFrame>
            <TaskScroll>
              <TaskTop>
                <CloseButton>Fermer</CloseButton>
              </TaskTop>
              <Card $h={60} $mb={8}>
                <CardHead>
                  <CardIcon />
                  Messages du solveur
                </CardHead>
                <Message>
                  L'esquisse manque de contraintes :<a href="#dof">1 Degré de liberté</a>
                </Message>
              </Card>
              <Card $h={228} $mb={6}>
                <CardHead>
                  <CardIcon />
                  Contraintes
                </CardHead>
                <FilterRow $mt={11}>
                  <Check />
                  <FilterButton $w={156}>
                    <FilterLabel>Filtres</FilterLabel>
                    <FilterDrop />
                  </FilterButton>
                </FilterRow>
                <ListBox $mt={6} $mb={11} $pad={4}>
                  <ListRow $h={17}>
                    <Check />
                    <RowIcons $w={20} $gap={0}>
                      <Icon name="hdist" size={13} />
                    </RowIcons>
                    Constraint1<Dim>(10 mm)</Dim>
                  </ListRow>
                  <ListRow $h={17}>
                    <Check />
                    <RowIcons $w={20} $gap={0}>
                      <Icon name="vdist" size={13} />
                    </RowIcons>
                    Constraint2<Dim>(10 mm)</Dim>
                  </ListRow>
                </ListBox>
              </Card>
              <Card $h={160}>
                <CardHead>
                  <CardIcon />
                  Éléments
                </CardHead>
                <FilterRow $mt={11}>
                  <Check />
                  <FilterButton $w={170}>
                    <FilterLabel>Filtres</FilterLabel>
                  </FilterButton>
                </FilterRow>
                <ListBox $mt={5} $mb={0} $pad={2}>
                  <ListRow $h={15}>
                    <Check />
                    <RowIcons $w={62} $gap={31}>
                      <Ring dot="#8c1a20" ring="#4f8a2a" bg="#e8e6c0" />
                      <Ring dot="#79a83a" ring="#9a9a8a" bg="#e8e6c0" />
                    </RowIcons>
                    1-Cercle
                  </ListRow>
                  <ListRow $h={15}>
                    <Check />
                    <RowIcons $w={62} $gap={0}>
                      <Edge a="#8c2a90" b="#79a83a" />
                      <Edge a="#79a83a" b="#8c2a90" />
                      <Edge a="#8c2a90" b="#79a83a" />
                    </RowIcons>
                    2-Ligne
                  </ListRow>
                </ListBox>
              </Card>
            </TaskScroll>
            <ScrollTrack>
              <ScrollThumb />
            </ScrollTrack>
          </TaskFrame>
        </Dock>
        <Center>
          <Viewport>
            <Scene />
          </Viewport>
          <DocTabs>
            <DocTab>
              <Icon name="fc" size={14} />
              Page de démarrage
              <CloseBox>×</CloseBox>
            </DocTab>
            <DocTab>
              <Icon name="fc" size={14} />
              CUBE20 : 1*
              <CloseBox $active>×</CloseBox>
            </DocTab>
          </DocTabs>
        </Center>
      </Main>
      <StatusBar>
        Contraindre un arc ou un cercle
        <StatusRight>
          <NavStyle>
            <svg width="9" height="13" viewBox="0 0 9 13">
              <rect x="1" y="1" width="7" height="11" rx="3.500" fill="none" stroke="#44443a" />
              <path d="M4.500 2v3" stroke="#44443a" />
            </svg>
            CAD
            <DownTri />
          </NavStyle>
          <Size>110,18 mm x 54,88 mm</Size>
          <DownTri $ml={-4} />
        </StatusRight>
      </StatusBar>
      <Tooltip>
        <TipLine $h={12}>
          <b>Contrainte d'arc ou de cercle</b> (R)
        </TipLine>
        <TipLine $h={24}>Contraindre un arc ou un cercle</TipLine>
        <TipLine $h={13}>
          <i>Sketcher_CompConstrainRadDia</i>
        </TipLine>
      </Tooltip>
      <Cursor width="12" height="16" viewBox="0 0 12 16">
        <path d="M1 1v12l3-3 2 5 2-1-2-5h4z" fill="#fff" stroke="#333" strokeWidth="1" />
      </Cursor>
    </Page>
  )
}
